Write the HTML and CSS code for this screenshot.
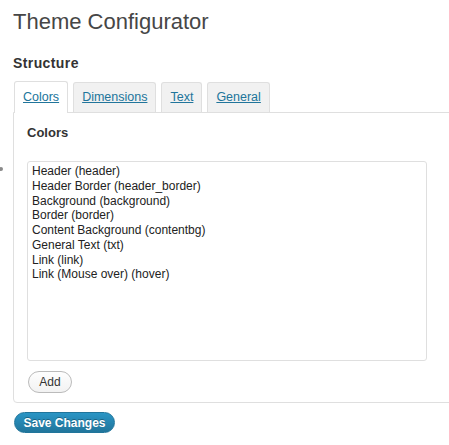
FILE: index.html
```html
<!DOCTYPE html>
<html>
<head>
<meta charset="utf-8">
<title>Theme Configurator</title>
<link rel="stylesheet" href="styles.css">
</head>
<body>
<div class="wrap">
  <span class="edge-mark"></span>
  <h2 class="page-title">Theme Configurator</h2>
  <h3 class="section-title">Structure</h3>
  <div class="tabs">
    <a class="tab active" href="#">Colors</a>
    <a class="tab" href="#">Dimensions</a>
    <a class="tab" href="#">Text</a>
    <a class="tab" href="#">General</a>
  </div>
  <div class="panel">
    <h4 class="panel-title">Colors</h4>
    <div class="listbox">
      <div class="item">Header (header)</div>
      <div class="item">Header Border (header_border)</div>
      <div class="item">Background (background)</div>
      <div class="item">Border (border)</div>
      <div class="item">Content Background (contentbg)</div>
      <div class="item">General Text (txt)</div>
      <div class="item">Link (link)</div>
      <div class="item">Link (Mouse over) (hover)</div>
    </div>
    <button class="btn-add" type="button">Add</button>
  </div>
  <button class="btn-primary" type="button">Save Changes</button>
</div>
</body>
</html>
```
FILE: styles.css
```css
html, body {
  margin: 0;
  padding: 0;
  background: #fff;
  overflow: hidden;
}
body {
  font-family: "Liberation Sans", Arial, sans-serif;
  color: #333;
}
.wrap {
  position: relative;
  padding-left: 13px;
  overflow: hidden;
  height: 445px;
}
.edge-mark {
  position: absolute;
  left: -1px;
  top: 167px;
  width: 4px;
  height: 4px;
  border-radius: 50%;
  background: #8a8a8a;
}
.page-title {
  margin: 7px 0 0;
  font-size: 22px;
  line-height: 29px;
  font-weight: normal;
  color: #464646;
}
.section-title {
  margin: 18px 0 0;
  font-size: 14px;
  line-height: 18px;
  font-weight: bold;
  letter-spacing: 0.4px;
  color: #333;
}
.tabs {
  display: flex;
  align-items: flex-end;
  gap: 5px;
  margin: 9px 0 0 1px;
  height: 31px;
}
.tab {
  display: block;
  box-sizing: border-box;
  height: 30px;
  padding: 6px 8px 0;
  font-size: 12.5px;
  line-height: 16px;
  color: #21759b;
  text-decoration: underline;
  background: #f1f1f1;
  border: 1px solid #dfdfdf;
  border-bottom: none;
  border-radius: 3px 3px 0 0;
}
.tab.active {
  height: 32px;
  padding-top: 7px;
  margin-bottom: -1px;
  background: #fff;
  position: relative;
  z-index: 1;
}
.panel {
  width: 520px;
  box-sizing: border-box;
  border: 1px solid #dfdfdf;
  border-radius: 0 0 0 4px;
  padding: 12px 13px 9px;
}
.panel-title {
  margin: 0;
  font-size: 13px;
  line-height: 16px;
  font-weight: bold;
  color: #333;
}
.listbox {
  margin-top: 20px;
  width: 400px;
  height: 200px;
  box-sizing: border-box;
  border: 1px solid #dfdfdf;
  border-radius: 3px;
  padding: 2px 4px;
}
.item {
  font-size: 12px;
  line-height: 14.75px;
  color: #222;
  white-space: nowrap;
}
.btn-add {
  display: block;
  margin: 10px 0 0 1px;
  width: 44px;
  height: 22px;
  box-sizing: border-box;
  padding: 0;
  border: 1px solid #bbb;
  border-radius: 11px;
  background: linear-gradient(#fefefe, #f2f2f2);
  font-family: "Liberation Sans", Arial, sans-serif;
  font-size: 12px;
  color: #333;
}
.btn-primary {
  display: block;
  margin: 9px 0 0 1px;
  width: 101px;
  height: 21px;
  box-sizing: border-box;
  padding: 0;
  border: 1px solid #21759b;
  border-radius: 11px;
  background: linear-gradient(#2a95c5, #21759b);
  font-family: "Liberation Sans", Arial, sans-serif;
  font-size: 12px;
  font-weight: bold;
  color: #fff;
  text-shadow: 0 -1px 0 rgba(0, 0, 0, 0.3);
}
```
